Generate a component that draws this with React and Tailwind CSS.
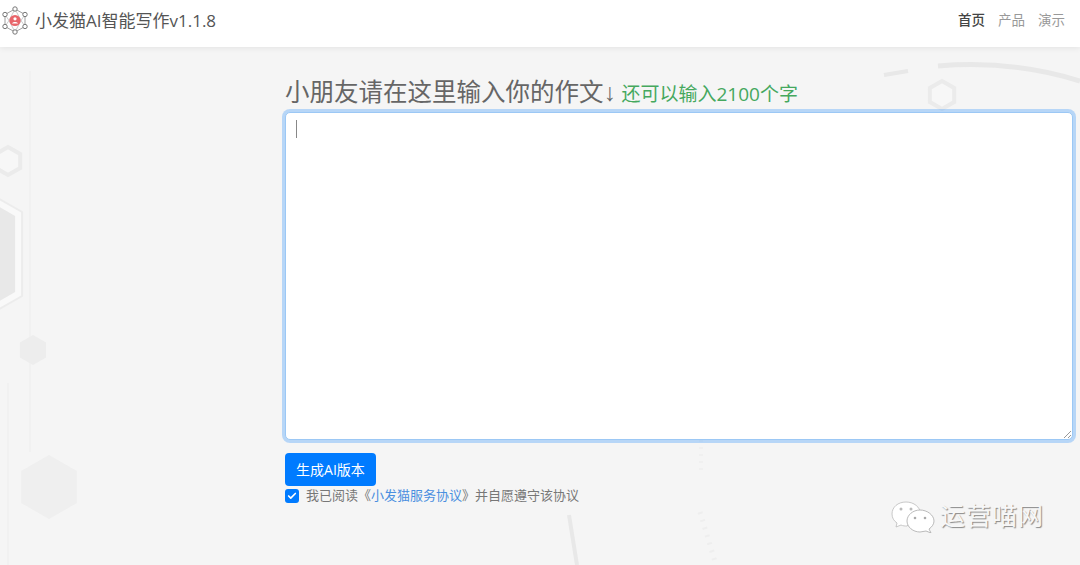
import { Check } from 'lucide-react'

const cjk = '"Open Sans", "Noto Sans CJK SC", sans-serif'

function hexPoints(cx, cy, r) {
  return [
    [cx, cy - r],
    [cx + r * 0.87, cy - r / 2],
    [cx + r * 0.87, cy + r / 2],
    [cx, cy + r],
    [cx - r * 0.87, cy + r / 2],
    [cx - r * 0.87, cy - r / 2],
  ]
    .map((p) => p.join(','))
    .join(' ')
}

// the faint tech pattern behind the page
function Backdrop() {
  return (
    <svg className="absolute inset-0 w-full h-full" viewBox="0 0 1080 518" fill="none">
      <path d="M30 24V405" stroke="#f1f1f1" strokeWidth="2" />
      <path d="M8 336V518" stroke="#f1f1f1" strokeWidth="2" />
      <polygon points={hexPoints(8, 114, 14)} stroke="#ebebeb" strokeWidth="4" fill="#f7f7f7" />
      <polygon points={hexPoints(-51, 207, 84)} stroke="#ececec" strokeWidth="2" fill="#f9f9f9" />
      <polygon points={hexPoints(-51, 207, 76)} fill="#e8e8e8" />
      <polygon points={hexPoints(33, 303, 15)} fill="#ededed" />
      <polygon points={hexPoints(49, 440, 32)} fill="#efefef" />
      <path d="M884 28L908 24" stroke="#e8e8e8" strokeWidth="4" />
      <path d="M938 19C985 15 1035 20 1080 34" stroke="#e8e8e8" strokeWidth="5" />
      <polygon points={hexPoints(942, 48, 14)} stroke="#ebebeb" strokeWidth="4" fill="#f7f7f7" />
      <path d="M569 468L577 518" stroke="#e8e8e8" strokeWidth="4" />
      <path d="M701 393V424" stroke="#f0f0f0" strokeWidth="4" strokeDasharray="2 5" />
      <path d="M700 465L716 518" stroke="#eeeeee" strokeWidth="5" strokeDasharray="2 6" />
    </svg>
  )
}

function Logo() {
  const nodes = [[14, 3], [24, 8.5], [24, 20.5], [14, 26], [4, 20.5], [4, 8.5]]
  return (
    <svg width="28" height="29" viewBox="0 0 28 29" fill="none">
      <polygon points={nodes.map((n) => n.join(',')).join(' ')} stroke="#888" strokeWidth="0.8" />
      <path d="M14 3L8 14.5L14 26L20 14.5ZM4 8.5L8 14.5L4 20.5M24 8.5L20 14.5L24 20.5" stroke="#aaa" strokeWidth="0.6" />
      {nodes.map(([x, y]) => (
        <circle key={`${x}-${y}`} cx={x} cy={y} r="2.2" fill="#fff" stroke="#777" strokeWidth="1" />
      ))}
      <circle cx="14" cy="14.5" r="5.6" fill="#e8666b" />
      <circle cx="14" cy="12.8" r="1.6" fill="#fff" />
      <path d="M11 17.6C11.2 15.4 16.8 15.4 17 17.6Z" fill="#fff" />
    </svg>
  )
}

function Watermark() {
  return (
    <div className="absolute left-[891px] top-[501px] flex items-center gap-[5px]">
      <svg width="44" height="32" viewBox="0 0 44 32">
        <path d="M15 1C7 1 1 6 1 13C1 17 3 20 6 22L5 26L10 24C12 25 14 25 16 25L30 13C29 6 23 1 15 1Z" fill="#fff" stroke="#bbb" strokeWidth="0.8" />
        <path d="M29 9C22 9 16 14 16 20C16 26 22 31 29 31C31 31 33 30 35 30L40 32L38 28C41 26 43 23 43 20C43 14 36 9 29 9Z" fill="#fff" stroke="#aaa" strokeWidth="0.8" />
        <circle cx="10" cy="8" r="1.5" fill="#bbb" />
        <circle cx="20" cy="8" r="1.5" fill="#bbb" />
        <circle cx="24" cy="17" r="1.3" fill="#aaa" />
        <circle cx="34" cy="17" r="1.3" fill="#aaa" />
      </svg>
      <span className="text-[25px] leading-none text-[#f7f7f7] tracking-[1px] -mt-[3px] [text-shadow:1px_1px_1px_#888]">运营喵网</span>
    </div>
  )
}

export default function App() {
  return (
    <div className="relative w-[1080px] h-[565px] overflow-hidden bg-[#f5f5f5]" style={{ fontFamily: cjk }}>
      <header className="relative z-10 h-[47px] bg-white shadow-[0_1px_6px_rgba(0,0,0,0.08)] flex items-center justify-between pl-px">
        <div className="flex items-center gap-[6px] -mt-[6px]">
          <Logo />
          <span className="text-[17px] text-[#555]">小发猫AI智能写作v1.1.8</span>
        </div>
        <nav className="flex gap-[13px] text-[13.5px] text-[#999] -mt-[6px] w-[122px] shrink-0 overflow-hidden">
          <span className="text-[#444] font-medium">首页</span>
          <span>产品</span>
          <span>演示</span>
        </nav>
      </header>

      <div className="relative h-[518px]">
        <Backdrop />
        <main className="relative ml-[285px] w-[788px] pt-[26px]">
          <h1 className="flex items-baseline h-[39px] text-[24.5px] leading-[38px] text-[#666]">
            小朋友请在这里输入你的作文
            <span className="text-[24.5px] font-['Liberation_Sans'] w-[11px]">↓</span>
            <span className="ml-[7px] text-[19px] text-[#45a85e]">还可以输入2100个字</span>
          </h1>
          <div className="relative h-[328px] bg-white rounded-[5px] border border-[#9cc8f5] shadow-[0_0_0_3px_rgba(0,123,255,0.25)]">
            <div className="absolute left-[10px] top-[7px] w-px h-[18px] bg-[#888]" />
            <svg className="absolute right-0 bottom-0" width="9" height="9" viewBox="0 0 9 9" stroke="#999">
              <path d="M1 8L8 1M5 8L8 5" />
            </svg>
          </div>
          <button className="block mt-[13px] w-[91px] h-[33px] rounded-[4px] bg-[#007bff] text-white text-[14px]">
            生成AI版本
          </button>
          <label className="flex items-center mt-[2px] h-[16px] text-[13px] text-[#777]">
            <span className="w-[14px] h-[14px] rounded-[3px] bg-[#007bff] flex items-center justify-center mr-[7px]">
              <Check size={10} strokeWidth={4} color="#fff" />
            </span>
            我已阅读《<span className="text-[#4a8fe0]">小发猫服务协议</span>》并自愿遵守该协议
          </label>
        </main>
      </div>

      <Watermark />
    </div>
  )
}
